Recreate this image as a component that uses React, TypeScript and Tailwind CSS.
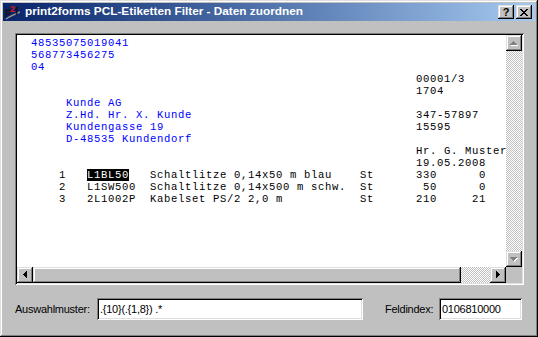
import React from 'react';

type Seg = { col: number; text: string; blue?: boolean; hl?: boolean };

const lines: Seg[][] = [
  [{ col: 0, text: '48535075019041', blue: true }],
  [{ col: 0, text: '568773456275', blue: true }],
  [{ col: 0, text: '04', blue: true }],
  [{ col: 55, text: '00001/3' }],
  [{ col: 55, text: '1704' }],
  [{ col: 5, text: 'Kunde AG', blue: true }],
  [{ col: 5, text: 'Z.Hd. Hr. X. Kunde', blue: true }, { col: 55, text: '347-57897' }],
  [{ col: 5, text: 'Kundengasse 19', blue: true }, { col: 55, text: '15595' }],
  [{ col: 5, text: 'D-48535 Kundendorf', blue: true }],
  [{ col: 55, text: 'Hr. G. Muster' }],
  [{ col: 55, text: '19.05.2008' }],
  [
    { col: 4, text: '1' },
    { col: 8, text: 'L1BL50', hl: true },
    { col: 17, text: 'Schaltlitze 0,14x50 m blau' },
    { col: 47, text: 'St' },
    { col: 55, text: '330' },
    { col: 64, text: '0' },
  ],
  [
    { col: 4, text: '2' },
    { col: 8, text: 'L1SW500' },
    { col: 17, text: 'Schaltlitze 0,14x500 m schw.' },
    { col: 47, text: 'St' },
    { col: 56, text: '50' },
    { col: 64, text: '0' },
  ],
  [
    { col: 4, text: '3' },
    { col: 8, text: '2L1002P' },
    { col: 17, text: 'Kabelset PS/2 2,0 m' },
    { col: 47, text: 'St' },
    { col: 55, text: '210' },
    { col: 63, text: '21' },
  ],
];

// classic win32 bevels
const raised =
  'bg-[#c0c0c0] shadow-[inset_-1px_-1px_#000,inset_1px_1px_#dfdfdf,inset_-2px_-2px_#808080,inset_2px_2px_#fff]';
const sunken =
  'shadow-[inset_1px_1px_#808080,inset_-1px_-1px_#fff,inset_2px_2px_#000,inset_-2px_-2px_#dfdfdf]';
const dither =
  '[background-image:repeating-conic-gradient(#c0c0c0_0_25%,#ffffff_0_50%)] [background-size:2px_2px]';

function Line({ segs }: { segs: Seg[] }) {
  let pos = 0;
  return (
    <div className="h-[12px] leading-[12px] whitespace-pre">
      {segs.map((s, i) => {
        const pad = ' '.repeat(Math.max(0, s.col - pos));
        pos = s.col + s.text.length;
        return (
          <React.Fragment key={i}>
            {pad}
            <span className={s.hl ? 'bg-black text-white' : s.blue ? 'text-[#0000ff]' : 'text-black'}>{s.text}</span>
          </React.Fragment>
        );
      })}
    </div>
  );
}

function Arrow({ dir, disabled }: { dir: 'up' | 'down' | 'left' | 'right'; disabled?: boolean }) {
  const paths = {
    up: 'M3 0h1v1h-1z M2 1h3v1h-3z M1 2h5v1h-5z M0 3h7v1h-7z',
    down: 'M0 0h7v1h-7z M1 1h5v1h-5z M2 2h3v1h-3z M3 3h1v1h-1z',
    left: 'M3 0h1v7h-1z M2 1h1v5h-1z M1 2h1v3h-1z M0 3h1v1h-1z',
    right: 'M0 0h1v7h-1z M1 1h1v5h-1z M2 2h1v3h-1z M3 3h1v1h-1z',
  };
  const vert = dir === 'up' || dir === 'down';
  const w = vert ? 8 : 5;
  const h = vert ? 5 : 8;
  return (
    <div className={`${raised} w-[16px] h-[16px] flex items-center justify-center`}>
      <svg width={w} height={h} viewBox={`0 0 ${w} ${h}`} shapeRendering="crispEdges">
        {disabled && <path d={paths[dir]} fill="#fff" transform="translate(1 1)" />}
        <path d={paths[dir]} fill={disabled ? '#808080' : '#000'} />
      </svg>
    </div>
  );
}

function P2fIcon() {
  return (
    <svg width="16" height="16" viewBox="0 0 16 16">
      <path d="M2 15 C6 12, 10 11, 16 8" stroke="#9a9a9a" strokeWidth="1.5" fill="none" />
      <text x="1" y="11" fontSize="10" fontWeight="bold" fontFamily="Liberation Sans, sans-serif" fill="#111">p</text>
      <text x="6" y="8" fontSize="9" fontWeight="bold" fontFamily="Liberation Sans, sans-serif" fill="#e01010">2</text>
      <text x="11" y="11" fontSize="10" fontWeight="bold" fontFamily="Liberation Sans, sans-serif" fill="#111">f</text>
    </svg>
  );
}

function TitleBar() {
  return (
    <div className="h-[18px] flex items-center bg-linear-to-r from-[#0a246a] to-[#a6caf0] pl-[1px] pr-[3px]">
      <P2fIcon />
      <span className="ml-[5px] text-white font-bold text-[11.8px] leading-none font-['Liberation_Sans',sans-serif] whitespace-nowrap">
        print2forms PCL-Etiketten Filter - Daten zuordnen
      </span>
      <div className="ml-auto flex gap-[2px]">
        <div className={`${raised} w-[16px] h-[14px] flex items-center justify-center text-black font-bold text-[11px] leading-none font-['Liberation_Sans',sans-serif]`}>
          ?
        </div>
        <div className={`${raised} w-[16px] h-[14px] flex items-center justify-center`}>
          <svg width="8" height="7" viewBox="0 0 8 7" shapeRendering="crispEdges">
            <path
              d="M0 0h2v1h-2z M6 0h2v1h-2z M1 1h2v1h-2z M5 1h2v1h-2z M2 2h4v1h-4z M3 3h2v1h-2z M2 4h4v1h-4z M1 5h2v1h-2z M5 5h2v1h-2z M0 6h2v1h-2z M6 6h2v1h-2z"
              fill="#000"
            />
          </svg>
        </div>
      </div>
    </div>
  );
}

function Editor() {
  return (
    <div className={`${sunken} ml-[12px] mt-[12px] w-[509px] h-[252px] p-[2px]`}>
      <div className="grid grid-cols-[489px_16px] grid-rows-[232px_16px] h-full">
        {/* 10.58px keeps each line box inside 12px; tracking brings the cell back to 7px */}
        <div className="bg-white overflow-hidden pl-[14px] pt-[2px] font-['Liberation_Mono',monospace] text-[10.58px] tracking-[0.652px]">
          {lines.map((segs, i) => (
            <Line key={i} segs={segs} />
          ))}
        </div>
        {/* vertical scrollbar, disabled */}
        <div className="flex flex-col">
          <Arrow dir="up" disabled />
          <div className={`${dither} flex-1`} />
          <Arrow dir="down" disabled />
        </div>
        {/* horizontal scrollbar */}
        <div className="flex">
          <Arrow dir="left" />
          <div className={`${raised} w-[428px] h-[16px]`} />
          <div className={`${dither} flex-1`} />
          <Arrow dir="right" />
        </div>
        <div className="bg-[#c0c0c0]" />
      </div>
    </div>
  );
}

function Field({ width, value }: { width: string; value: string }) {
  return (
    <div className={`${sunken} ${width} h-[22px] bg-white flex items-center pl-[3px] text-[11px] text-black font-['Liberation_Sans',sans-serif] whitespace-pre`}>
      {value}
    </div>
  );
}

export default function App() {
  return (
    <div className="w-[538px] h-[337px] bg-[#c0c0c0] p-[3px] flex flex-col shadow-[inset_-1px_-1px_#000,inset_1px_1px_#dfdfdf,inset_-2px_-2px_#808080,inset_2px_2px_#fff] font-['Liberation_Sans',sans-serif]">
      <TitleBar />
      <Editor />
      <div className="mt-[13px] flex items-center pl-[12px] text-[11px] tracking-[-0.25px] text-black">
        <span className="w-[82px]">Auswahlmuster:</span>
        <Field width="w-[266px]" value=".{10}(.{1,8}) .*" />
        <span className="ml-[22px] w-[54px]">Feldindex:</span>
        <Field width="w-[83px]" value="0106810000" />
      </div>
    </div>
  );
}
